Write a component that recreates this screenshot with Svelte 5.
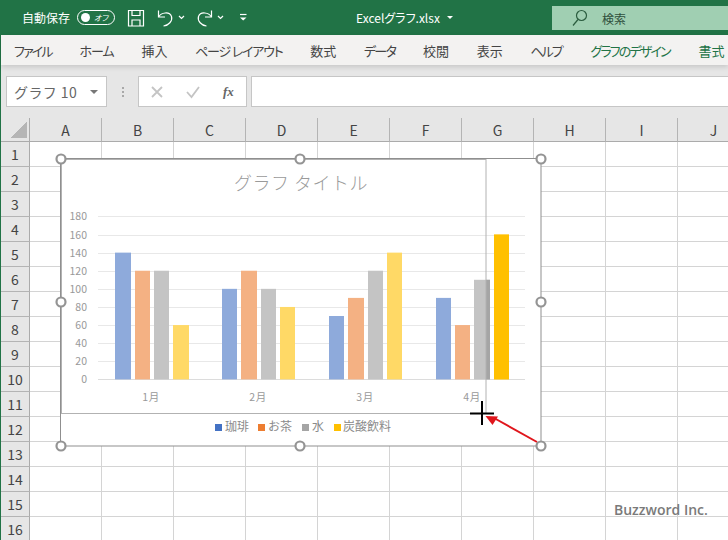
<script>
  const tabs = [
    { t: 'ファイル', ls: -1.8 }, { t: 'ホーム', ls: -1 }, { t: '挿入', ls: 0 }, { t: 'ページ レイアウト', ls: -1.2 }, { t: '数式', ls: 0 },
    { t: 'データ', ls: -1.6 }, { t: '校閲', ls: 0 }, { t: '表示', ls: 0 }, { t: 'ヘルプ', ls: -2 },
    { t: 'グラフのデザイン', ls: -1.85, g: true }, { t: '書式', ls: 0, g: true }
  ];
  const cols = ['A','B','C','D','E','F','G','H','I','J'];
  const rows = Array.from({ length: 16 }, (_, i) => i + 1);

  const base = 379.4;
  const unit = 163 / 180;
  const y = (v) => base - v * unit;
  const ticks = [0,20,40,60,80,100,120,140,160,180];
  const washed = ['#8eaadb', '#f4b183', '#c4c4c4', '#ffd966'];
  const groups = [
    { label: '1月', cx: 151, bars: [[115,16,140],[135,15,120],[154,15,120],[173,16,60]] },
    { label: '2月', cx: 258, bars: [[222,15,100],[241,16,120],[261,15,100],[280,15,80]] },
    { label: '3月', cx: 365, bars: [[329,15,70],[348,16,90],[368,15,120],[387,15,140]] },
    { label: '4月', cx: 472, bars: [[436,15,90],[455,15,60],[474,16,110],[494,15,160]] }
  ];
  const legend = [
    { c: '#4472c4', x: 215, tx: 225, t: '珈琲' },
    { c: '#ed7d31', x: 258, tx: 268, t: 'お茶' },
    { c: '#a5a5a5', x: 302, tx: 312, t: '水' },
    { c: '#ffc000', x: 334, tx: 343, t: '炭酸飲料' }
  ];
  const handles = [[61,159],[300,159],[541,159],[61,302],[541,302],[61,446],[300,446],[541,446]];
</script>

<div class="app">
  <header class="title">
    <div class="qat">
      <span class="autosave">自動保存</span>
      <span class="toggle"><i class="dot"></i><em>オフ</em></span>
      <svg class="ico" width="130" height="35" viewBox="125 0 130 35" fill="none" stroke="#fff" stroke-width="1.2">
        <path d="M128.5 10.5h15v15.500h-15z" />
        <path d="M132 10.500v5h8v-5M132 26v-6h8v6" />
        <path d="M158.500 10.500v6.500h6.500" />
        <path d="M158.800 16.800C161 12.500 169.500 11 171.500 16.500C172.800 21 168.500 25.500 163.500 26" />
        <path d="M179 16l2.500 2.500 2.500-2.500" />
        <path d="M211.500 10.500v6.500h-6.500" />
        <path d="M211.200 16.800C209 12.500 200.500 11 198.500 16.500C197.200 21 201.500 25.500 206.500 26" />
        <path d="M218 16l2.500 2.500 2.500-2.500" />
        <path d="M240 14.500h6.500" />
        <path d="M240 17.500l3.200 3 3.300-3z" fill="#fff" stroke="none" />
      </svg>
    </div>
    <div class="file">Excelグラフ.xlsx<i class="fcaret"></i></div>
    <div class="search">
      <svg width="16" height="18" viewBox="0 0 16 18" fill="none" stroke="#2b5d3f" stroke-width="1.200">
        <circle cx="9.500" cy="6.500" r="5" />
        <path d="M6 10.500L1 16.500" />
      </svg>
      <span>検索</span>
    </div>
  </header>

  <div class="body">
    <nav class="tabs">
      {#each tabs as tab}
        <span class:green={tab.g} style:letter-spacing="{tab.ls}px">{tab.t}</span>
      {/each}
    </nav>

    <div class="fbar">
      <div class="namebox"><span>グラフ 10</span><i class="ncaret"></i></div>
      <div class="dots"><i></i><i></i><i></i></div>
      <div class="fbtns">
        <svg width="14" height="14" viewBox="0 0 14 14" fill="none" stroke="#c4c4c4" stroke-width="1.800"><path d="M2 2l10 10M12 2L2 12" /></svg>
        <svg width="16" height="14" viewBox="0 0 16 14" fill="none" stroke="#c4c4c4" stroke-width="1.800"><path d="M2 7l4.500 5L14 2" /></svg>
        <span class="fx">fx</span>
      </div>
      <div class="finput"></div>
    </div>

    <div class="sheet">
      <div class="colhead">
        <div class="corner"><i></i></div>
        {#each cols as c}<div class="col">{c}</div>{/each}
      </div>
      {#each rows as r}
        <div class="row">
          <div class="rowhead">{r}</div>
          {#each cols as c}<div class="cell"></div>{/each}
        </div>
      {/each}
    </div>
  </div>

  <svg class="chart" width="728" height="540" viewBox="0 0 728 540">
    <rect x="61" y="159" width="480" height="287" fill="#fff" />
    <rect x="60.500" y="158.500" width="480.500" height="287.500" fill="none" stroke="#8f8f8f" />

    <text class="ctitle" x="301" y="190" text-anchor="middle">グラフ タイトル</text>

    {#each ticks as t}
      <line x1="98" x2="525" y1={Math.round(y(t)) + 0.5} y2={Math.round(y(t)) + 0.5} stroke={t === 0 ? '#dcdcdc' : '#e8e8e8'} />
      <text class="axis" x="87" y={y(t) + 4} text-anchor="end">{t}</text>
    {/each}

    {#each groups as g}
      {#each g.bars as b, i}
        <rect x={b[0]} y={y(b[2])} width={b[1]} height={b[2] * unit} fill={washed[i]} />
      {/each}
      <text class="axis month" x={g.cx} y="401" text-anchor="middle">{g.label}</text>
    {/each}
    <rect x="486" y={y(110)} width="4" height={110 * unit} fill="#a5a5a5" />
    <rect x="494" y={y(160)} width="15" height={160 * unit} fill="#ffc000" />

    {#each legend as l}
      <rect x={l.x} y="424" width="7" height="7" fill={l.c} />
      <text class="legend" x={l.tx} y="431">{l.t}</text>
    {/each}

    <rect x="61.500" y="159.500" width="424.500" height="254" fill="none" stroke="#b2b2b2" />

    {#each handles as h}
      <circle cx={h[0]} cy={h[1]} r="4.500" fill="#fff" stroke="#949494" stroke-width="2.200" />
    {/each}

    <path d="M537 442L494 418" stroke="#e0161c" stroke-width="2" fill="none" />
    <path d="M485.500 416L498 416.500L492.500 425z" fill="#e0161c" />
    <path d="M482 401v24M470 413.500h24" stroke="#000" stroke-width="2" fill="none" />
  </svg>

  <div class="mark">Buzzword Inc.</div>
</div>

<style>
  :global(body) { margin: 0; background: #fff; overflow: hidden; }
  .app {
    position: relative;
    width: 728px;
    height: 540px;
    overflow: hidden;
    font-family: "Noto Sans CJK JP", "Noto Sans", sans-serif;
    font-feature-settings: "palt";
    color: #444;
  }
  .title {
    display: flex;
    align-items: center;
    height: 35px;
    background: #217346;
    color: #fff;
    font-size: 12px;
  }
  .qat { display: flex; align-items: center; width: 356px; padding-left: 22px; box-sizing: border-box; }
  .autosave { width: 55px; letter-spacing: 0; }
  .toggle {
    display: flex;
    align-items: center;
    justify-content: space-between;
    width: 38px;
    height: 15px;
    box-sizing: border-box;
    padding: 0 6px 0 3px;
    border: 1px solid #fff;
    border-radius: 8px;
  }
  .dot { width: 9px; height: 9px; border-radius: 50%; background: #fff; }
  .toggle em { font-size: 8px; font-style: italic; line-height: 1; }
  .ico { margin-left: 10px; flex: none; }
  .file { display: flex; align-items: center; width: 196px; }
  .fcaret {
    margin-left: 7px;
    border-left: 3.500px solid transparent;
    border-right: 3.500px solid transparent;
    border-top: 3.500px solid #fff;
  }
  .search {
    display: flex;
    align-items: center;
    gap: 14px;
    flex: 1;
    align-self: flex-end;
    height: 24px;
    margin-bottom: 5px;
    padding-left: 20px;
    background: #a0cfb2;
    color: #2f4f3c;
  }
  .body { border-left: 1px solid #217346; }
  .tabs {
    position: relative;
    z-index: 1;
    display: flex;
    align-items: center;
    gap: 27.700px;
    height: 30px;
    padding-left: 13px;
    background: #f3f2f1;
    box-shadow: 0 2px 5px rgba(0, 0, 0, 0.14);
    font-size: 13px;
    white-space: nowrap;
  }
  .tabs .green { color: #217346; margin-left: 1px; }
  .fbar {
    display: flex;
    align-items: stretch;
    height: 31px;
    padding: 11px 0;
    background: #e6e6e6;
  }
  .namebox {
    display: flex;
    align-items: center;
    justify-content: space-between;
    box-sizing: border-box;
    width: 101px;
    margin-left: 5px;
    padding: 0 8px 0 7px;
    background: #fff;
    border: 1px solid #c6c6c6;
    font-size: 14px;
    letter-spacing: 0.400px;
    font-feature-settings: normal;
    color: #666;
  }
  .ncaret {
    border-left: 4px solid transparent;
    border-right: 4px solid transparent;
    border-top: 4px solid #777;
  }
  .dots {
    display: flex;
    flex-direction: column;
    justify-content: center;
    align-items: center;
    gap: 2px;
    width: 31px;
  }
  .dots i { width: 2px; height: 2px; background: #a8a8a8; }
  .fbtns {
    display: flex;
    align-items: center;
    gap: 21px;
    box-sizing: border-box;
    width: 109px;
    padding-left: 11px;
    background: #fff;
    border: 1px solid #c6c6c6;
  }
  .fx {
    margin-left: 1px;
    font-family: "Liberation Serif", serif;
    font-style: italic;
    font-weight: 700;
    font-size: 13px;
    color: #666;
  }
  .finput {
    flex: 1;
    margin-left: 4px;
    background: #fff;
    border: 1px solid #c6c6c6;
    border-right: 0;
  }
  .colhead { display: flex; height: 24px; background: #e6e6e6; }
  .corner {
    position: relative;
    box-sizing: border-box;
    flex: none;
    width: 29px;
    border-right: 1px solid #ababab;
    border-bottom: 1px solid #ababab;
  }
  .corner i {
    position: absolute;
    left: 9px;
    top: 3px;
    width: 17px;
    height: 17px;
    background: linear-gradient(135deg, transparent 50%, #b5b5b5 50%);
  }
  .col {
    display: flex;
    align-items: center;
    justify-content: center;
    box-sizing: border-box;
    flex: none;
    width: 72px;
    border-right: 1px solid #b4b4b4;
    border-bottom: 1px solid #ababab;
    font-size: 14px;
    color: #444;
  }
  .row { display: flex; height: 25px; }
  .rowhead {
    display: flex;
    align-items: center;
    justify-content: center;
    box-sizing: border-box;
    flex: none;
    width: 29px;
    padding-bottom: 1px;
    background: #e6e6e6;
    border-right: 1px solid #ababab;
    border-bottom: 1px solid #b4b4b4;
    font-size: 14px;
    color: #444;
  }
  .cell {
    box-sizing: border-box;
    flex: none;
    width: 72px;
    border-right: 1px solid #d4d4d4;
    border-bottom: 1px solid #d4d4d4;
  }
  .chart { position: absolute; left: 0; top: 0; }
  .ctitle { font-size: 18px; font-weight: 300; fill: #9a9a9a; letter-spacing: 0.500px; font-feature-settings: normal; }
  .axis { font-size: 10.500px; fill: #999; }
  .month { letter-spacing: 0.500px; }
  .legend { font-size: 12px; fill: #8a8a8a; font-feature-settings: normal; }
  .mark {
    position: absolute;
    left: 614px;
    top: 500px;
    font-family: "Open Sans", sans-serif;
    font-weight: 600;
    font-size: 14px;
    line-height: 20px;
    color: #7a7a7a;
  }
</style>
